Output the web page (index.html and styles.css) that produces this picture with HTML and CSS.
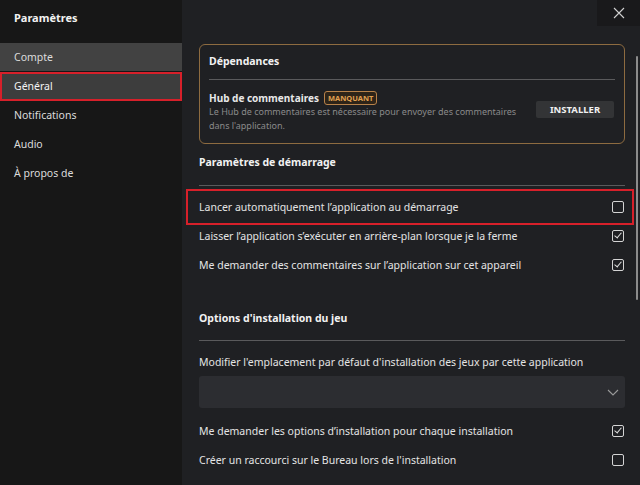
FILE: index.html
```html
<!DOCTYPE html>
<html lang="fr">
<head>
    <meta charset="UTF-8">
    <meta name="viewport" content="width=device-width, initial-scale=1.0">
    <title>Paramètres</title>
    <link rel="stylesheet" href="styles.css">
</head>
<body>

    <div class="sidebar">
        <h1 class="sidebar-title">Paramètres</h1>
        <ul class="nav">
            <li class="nav-item hover">Compte</li>
            <li class="nav-item active marked">Général</li>
            <li class="nav-item">Notifications</li>
            <li class="nav-item">Audio</li>
            <li class="nav-item">À propos de</li>
        </ul>
    </div>

    <div class="main">
        <button class="close-btn" aria-label="Fermer">
            <svg width="12" height="12" viewBox="0 0 12 12"><path d="M1 1 L11 11 M11 1 L1 11" stroke="#d0d0d0" stroke-width="1.1" fill="none"/></svg>
        </button>
        <div class="scrollbar"></div>

        <!-- Dependances -->
        <div class="dep-card">
            <h2 class="card-title">Dépendances</h2>
            <div class="divider"></div>
            <div class="dep-row">
                <div class="dep-text">
                    <div class="dep-name">Hub de commentaires <span class="badge">MANQUANT</span></div>
                    <p class="dep-desc">Le Hub de commentaires est nécessaire pour envoyer des commentaires dans l'application.</p>
                </div>
                <button class="install-btn">INSTALLER</button>
            </div>
        </div>

        <h2 class="section-title first">Paramètres de démarrage</h2>
        <div class="divider wide"></div>
        <div class="opt-row marked">
            <span>Lancer automatiquement l’application au démarrage</span>
            <span class="checkbox"></span>
        </div>
        <div class="opt-row">
            <span>Laisser l’application s’exécuter en arrière-plan lorsque je la ferme</span>
            <span class="checkbox checked"></span>
        </div>
        <div class="opt-row">
            <span>Me demander des commentaires sur l’application sur cet appareil</span>
            <span class="checkbox checked"></span>
        </div>

        <h2 class="section-title second">Options d'installation du jeu</h2>
        <div class="divider wide"></div>
        <p class="field-label">Modifier l'emplacement par défaut d'installation des jeux par cette application</p>
        <div class="dropdown">
            <svg width="12" height="7" viewBox="0 0 12 7"><path d="M1 1 L6 6 L11 1" stroke="#9a9a9a" stroke-width="1.1" fill="none"/></svg>
        </div>
        <div class="opt-row after-drop">
            <span>Me demander les options d’installation pour chaque installation</span>
            <span class="checkbox checked"></span>
        </div>
        <div class="opt-row">
            <span>Créer un raccourci sur le Bureau lors de l'installation</span>
            <span class="checkbox"></span>
        </div>
    </div>

</body>
</html>
```

FILE: styles.css
```css
body {
    margin: 0;
    width: 640px;
    height: 485px;
    overflow: hidden;
    display: flex;
    font-family: "Noto Sans", "Open Sans", sans-serif;
    font-size: 10.5px;
    color: #e8e8e8;
    background-color: #1f2023;
}

/* sidebar */
.sidebar {
    width: 182px;
    flex-shrink: 0;
    background-color: #171717;
}

.sidebar-title {
    margin: 0;
    padding: 10px 14px 0;
    height: 43px;
    box-sizing: border-box;
    font-size: 11px;
    font-weight: bold;
    line-height: 16px;
    color: #f2f2f2;
}

.nav {
    list-style: none;
    margin: 0;
    padding: 0;
}

.nav-item {
    height: 29px;
    line-height: 29px;
    padding: 0 14px;
    font-size: 10.5px;
    color: #dcdcdc;
}

.nav-item.hover {
    background-color: #424242;
    border-bottom: 1px solid #171717;
    height: 28px;
    line-height: 28px;
}

.nav-item.active {
    background-color: #3d3d3d;
    color: #f4f4f4;
}

/* red annotation frame */
.marked {
    position: relative;
}

.marked::after {
    content: "";
    position: absolute;
    border: 2px solid #d7202a;
    pointer-events: none;
}

.nav-item.marked::after {
    inset: 0 0 0 0;
}

.opt-row.marked::after {
    inset: -3px -9px -4px -13px;
}

/* main */
.main {
    flex: 1;
    position: relative;
    padding: 44px 15px 0 17px;
}

.close-btn {
    position: absolute;
    top: 0;
    right: 0;
    width: 43px;
    height: 26px;
    border: none;
    background-color: #19191b;
    display: flex;
    align-items: center;
    justify-content: center;
    padding: 0;
}

.scrollbar {
    position: absolute;
    right: 2px;
    top: 56px;
    width: 2px;
    height: 244px;
    background-color: #8c8c8c;
    border-radius: 1px;
}

.dep-card {
    border: 1px solid #8d6b40;
    border-radius: 6px;
    padding: 8px 9px 11px;
    height: 100px;
    box-sizing: border-box;
}

.card-title, .section-title {
    margin: 0;
    font-size: 10.5px;
    font-weight: bold;
    line-height: 16px;
    color: #f2f2f2;
}

.divider {
    height: 1px;
    background-color: #5a5a5c;
    margin: 10px 0 10px;
}

.dep-row {
    display: flex;
    align-items: center;
    justify-content: space-between;
}

.dep-name {
    font-weight: bold;
    font-size: 10px;
    line-height: 14px;
    display: flex;
    align-items: center;
    gap: 5px;
    margin-top: 1px;
}

.badge {
    font-size: 7.5px;
    font-weight: bold;
    color: #e0a050;
    background-color: #2e2418;
    border: 1px solid #b8824a;
    border-radius: 3px;
    padding: 1px 3px;
    line-height: 10px;
}

.dep-desc {
    margin: 0;
    width: 320px;
    font-size: 9px;
    line-height: 14px;
    color: #8a8a8a;
}

.install-btn {
    width: 78px;
    height: 17px;
    border: none;
    border-radius: 2px;
    background-color: #333436;
    color: #f0f0f0;
    font-family: "Noto Sans", sans-serif;
    font-size: 9.5px;
    font-weight: bold;
    padding: 0;
    margin-top: -4px;
    margin-right: 1px;
}

.section-title.first {
    margin-top: 10px;
}

.section-title.second {
    margin-top: 31px;
}

.divider.wide {
    margin: 15px 0 6px;
}

.section-title.second + .divider.wide {
    margin: 14px 0 13px;
}

.opt-row {
    height: 29px;
    display: flex;
    align-items: center;
    justify-content: space-between;
    color: #e4e4e4;
}

.checkbox {
    width: 10px;
    height: 10px;
    border: 1.5px solid #d4d4d4;
    border-radius: 2px;
    margin-right: 1px;
    position: relative;
}

.checkbox.checked::after {
    content: "";
    position: absolute;
    left: 3px;
    top: 0;
    width: 3px;
    height: 6px;
    border: solid #e0e0e0;
    border-width: 0 1.2px 1.2px 0;
    transform: rotate(40deg);
}

.field-label {
    margin: 0;
    line-height: 16px;
    color: #e4e4e4;
}

.dropdown {
    margin-top: 6px;
    height: 32px;
    background-color: #2c2d31;
    border-radius: 3px;
    display: flex;
    align-items: center;
    justify-content: flex-end;
    padding-right: 6px;
}

.opt-row.after-drop {
    margin-top: 8px;
}
```
